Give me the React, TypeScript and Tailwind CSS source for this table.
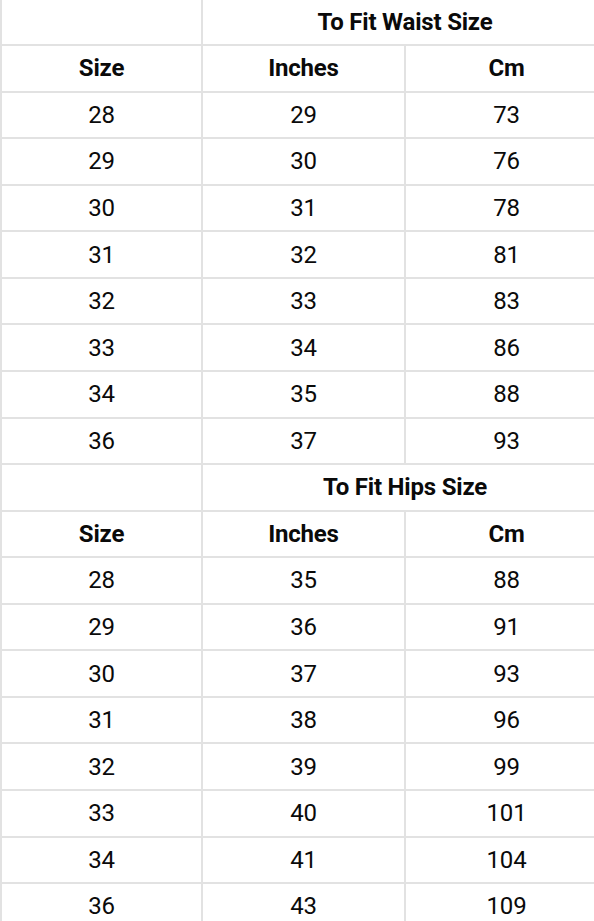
const waist = [
  ['28', '29', '73'],
  ['29', '30', '76'],
  ['30', '31', '78'],
  ['31', '32', '81'],
  ['32', '33', '83'],
  ['33', '34', '86'],
  ['34', '35', '88'],
  ['36', '37', '93'],
];

const hips = [
  ['28', '35', '88'],
  ['29', '36', '91'],
  ['30', '37', '93'],
  ['31', '38', '96'],
  ['32', '39', '99'],
  ['33', '40', '101'],
  ['34', '41', '104'],
  ['36', '43', '109'],
];

const cell = 'flex items-center justify-center border-l-2 border-b-2 border-[#e2e2e2]';

function Section({ title, rows, first }: { title: string; rows: string[][]; first?: boolean }) {
  return (
    <>
      {/* Title row */}
      <div className={`grid grid-cols-[201px_406px] ${first ? 'h-[46px]' : 'h-[46.57px]'}`}>
        <div className={cell} />
        <div className={`${cell} font-bold`}>{title}</div>
      </div>
      {/* Column heads */}
      <div className="grid grid-cols-[201px_203px_203px] h-[46.57px] font-bold">
        <div className={cell}>Size</div>
        <div className={cell}>Inches</div>
        <div className={cell}>Cm</div>
      </div>
      {rows.map((r, i) => (
        <div key={i} className="grid grid-cols-[201px_203px_203px] h-[46.57px]">
          {r.map((v, j) => (
            <div key={j} className={cell}>
              {v}
            </div>
          ))}
        </div>
      ))}
    </>
  );
}

export default function App() {
  return (
    <div className="w-[594px] h-[921px] overflow-hidden bg-white">
      <div
        className="w-[607px] flex flex-col text-[24px] text-[#0a0a0a] leading-none tracking-[-0.2px]"
        style={{ fontFamily: 'Roboto, "Liberation Sans", sans-serif' }}
      >
        <Section title="To Fit Waist Size" rows={waist} first />
        <Section title="To Fit Hips Size" rows={hips} />
      </div>
    </div>
  );
}
